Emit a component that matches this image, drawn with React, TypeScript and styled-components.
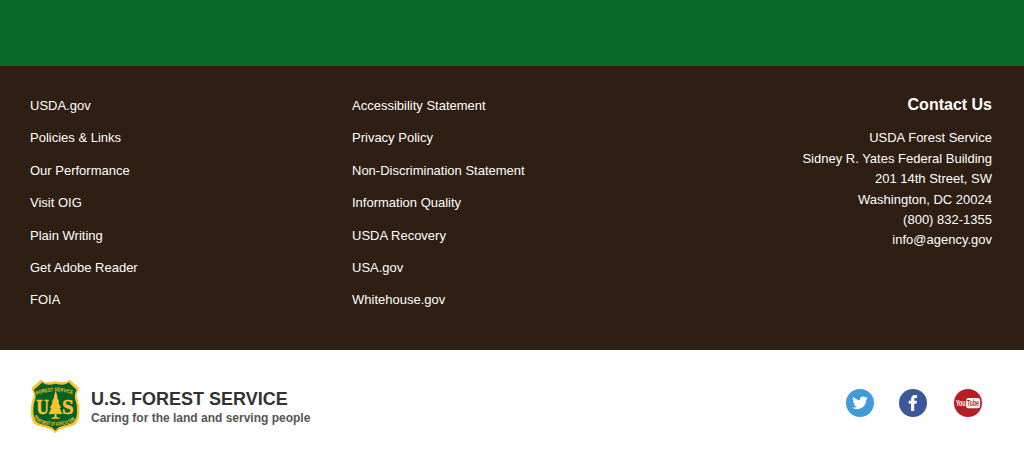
import React from "react";
import styled, { createGlobalStyle } from "styled-components";

const GlobalStyle = createGlobalStyle`
  * { box-sizing: border-box; }
  body {
    margin: 0;
    background: #fff;
    font-family: "Liberation Sans", Arial, sans-serif;
  }
`;

const Page = styled.div`
  display: flex;
  flex-direction: column;
  height: 460px;
  overflow: hidden;
`;

const GreenBand = styled.div`
  flex: 0 0 66px;
  background: #086828;
`;

const FooterLinks = styled.nav`
  display: grid;
  grid-template-columns: 322px 322px 1fr;
  flex: 0 0 284px;
  padding: 29px 32px 0 30px;
  background: #2e1e13;
  color: #fff;
  font-size: 13px;
  line-height: 20.4px;
`;

const LinkList = styled.ul`
  display: flex;
  flex-direction: column;
  gap: 12px;
  margin: 0;
  padding: 1px 0 0;
  list-style: none;
`;

const FooterLink = styled.a`
  color: inherit;
  text-decoration: none;
`;

const Contact = styled.address`
  display: flex;
  flex-direction: column;
  align-items: flex-end;
  font-style: normal;
`;

const ContactTitle = styled.h2`
  margin: 0 0 14.4px;
  font-size: 16px;
  line-height: 19px;
`;

const BottomBar = styled.footer`
  display: flex;
  align-items: center;
  justify-content: space-between;
  height: 110px;
  padding: 0 42px 0 30px;
`;

const Brand = styled.div`
  display: flex;
  align-items: center;
  gap: 11px;
  padding-top: 2px;
`;

const BrandText = styled.div`
  padding-top: 4px;
`;

const BrandName = styled.div`
  color: #333;
  font-size: 18px;
  font-weight: bold;
  line-height: 20px;
`;

const Tagline = styled.div`
  color: #555;
  font-size: 12px;
  font-weight: bold;
  line-height: 18px;
`;

const Social = styled.div`
  display: grid;
  grid-template-columns: 53px 55px 28px;
  margin-bottom: 4px;
`;

const SocialIcon = styled.svg`
  display: block;
  width: 28px;
  height: 28px;
`;

const ShieldSvg = styled.svg`
  display: block;
  width: 50px;
  height: 55px;
  overflow: visible;
`;

const siteLinks = ["USDA.gov", "Policies & Links", "Our Performance", "Visit OIG", "Plain Writing", "Get Adobe Reader", "FOIA"];
const policyLinks = ["Accessibility Statement", "Privacy Policy", "Non-Discrimination Statement", "Information Quality", "USDA Recovery", "USA.gov", "Whitehouse.gov"];
const contactLines = ["USDA Forest Service", "Sidney R. Yates Federal Building", "201 14th Street, SW", "Washington, DC 20024", "(800) 832-1355", "info@agency.gov"];

const Links = ({ items }: { items: string[] }) => (
  <LinkList>
    {items.map((item) => (
      <li key={item}><FooterLink>{item}</FooterLink></li>
    ))}
  </LinkList>
);

const shieldPath =
  "M51 17 Q57 25 72 25 Q84 25 95 22 Q106 25 118 25 Q132 24 138 17 L165 43 Q155 60 161 77 Q167 93 166 118 Q166 143 150 153 Q134 159 116 163 Q103 166 94 178 Q85 166 72 163 Q54 159 37 153 Q21 143 21 118 Q20 93 26 77 Q33 60 22 43 Z";

const Shield = () => (
  <ShieldSvg viewBox="18 15 150 165" aria-label="Forest Service shield">
    <defs>
      <path id="shield-top" d="M38 63 Q93 41 152 63" />
      <path id="shield-bottom" d="M27 126 Q36 153 93 155 Q151 153 161 126" />
    </defs>
    <path d={shieldPath} fill="#fdc02f" />
    <path d={shieldPath} fill="#006325" transform="translate(9.4 9.5) scale(.9)" />
    <g fill="#fdc02f" fontFamily="Liberation Sans, Arial, sans-serif" fontWeight="bold">
      <text fontSize="16"><textPath href="#shield-top" textLength="110" lengthAdjust="spacingAndGlyphs">FOREST SERVICE</textPath></text>
      <text fontSize="16"><textPath href="#shield-bottom" textLength="143" lengthAdjust="spacingAndGlyphs">DEPARTMENT OF AGRICULTURE</textPath></text>
      <g fontFamily="Liberation Serif, serif" fontSize="60" stroke="#fdc02f" strokeWidth="1.5">
        <text transform="translate(37 119) scale(.88 1)">U</text>
        <text transform="translate(114 119) scale(1.05 1)">S</text>
      </g>
    </g>
    <path fill="#fdc02f" d="M95 50 L101 69 L99 69 L106 85 L103 85 L111 102 L107 102 L115 121 L97 120 L98 129 L107 131 L107 134 L82 134 L82 131 L91 129 L92 120 L74 121 L82 102 L78 102 L86 85 L83 85 L91 69 L89 69 Z" />
  </ShieldSvg>
);

const Twitter = () => (
  <SocialIcon viewBox="0 0 28 28" aria-label="Twitter">
    <circle cx="14" cy="14" r="14" fill="#409cd8" />
    <path
      transform="translate(6.2 6) scale(.65)"
      fill="#fff"
      d="M23.95 4.57a10 10 0 0 1-2.82.77 4.96 4.96 0 0 0 2.16-2.72c-.95.55-2 .96-3.13 1.19a4.92 4.92 0 0 0-8.38 4.48A13.9 13.9 0 0 1 1.64 3.16a4.93 4.93 0 0 0 1.52 6.57 4.9 4.9 0 0 1-2.23-.61v.06a4.92 4.92 0 0 0 3.95 4.83 5 5 0 0 1-2.21.08 4.94 4.94 0 0 0 4.6 3.42A9.87 9.87 0 0 1 0 19.54a14 14 0 0 0 7.55 2.21c9.05 0 14-7.5 14-13.98l-.02-.64a9.94 9.94 0 0 0 2.42-2.56z"
    />
  </SocialIcon>
);

const Facebook = () => (
  <SocialIcon viewBox="0 0 28 28" aria-label="Facebook">
    <circle cx="14" cy="14" r="14" fill="#3b5998" />
    <path fill="#fff" d="M12.1 22V14.7H9.8V11.8h2.3V9.9c0-2.5 1.4-3.8 3.7-3.8.9 0 1.7.1 2.2.2v2.6h-1.4c-1.1 0-1.4.5-1.4 1.4v1.5h2.7l-.4 2.9h-2.3V22z" />
  </SocialIcon>
);

const YouTube = () => (
  <SocialIcon viewBox="0 0 28 28" aria-label="YouTube">
    <circle cx="14" cy="14" r="14" fill="#b41f25" />
    <rect x="12.1" y="9" width="14" height="10.3" rx="2.3" fill="#fff" />
    <g fontFamily="Liberation Sans, Arial, sans-serif" fontSize="9" fontWeight="bold">
      <text transform="translate(2 17.2) scale(.58 1)" fill="#fff">You</text>
      <text transform="translate(13.1 17.4) scale(.57 1)" fill="#b41f25">Tube</text>
    </g>
  </SocialIcon>
);

export default function App() {
  return (
    <Page>
      <GlobalStyle />
      <GreenBand />
      <FooterLinks>
        <Links items={siteLinks} />
        <Links items={policyLinks} />
        <Contact>
          <ContactTitle>Contact Us</ContactTitle>
          {contactLines.map((line) => <span key={line}>{line}</span>)}
        </Contact>
      </FooterLinks>
      <BottomBar>
        <Brand>
          <Shield />
          <BrandText>
            <BrandName>U.S. FOREST SERVICE</BrandName>
            <Tagline>Caring for the land and serving people</Tagline>
          </BrandText>
        </Brand>
        <Social>
          <Twitter />
          <Facebook />
          <YouTube />
        </Social>
      </BottomBar>
    </Page>
  );
}
